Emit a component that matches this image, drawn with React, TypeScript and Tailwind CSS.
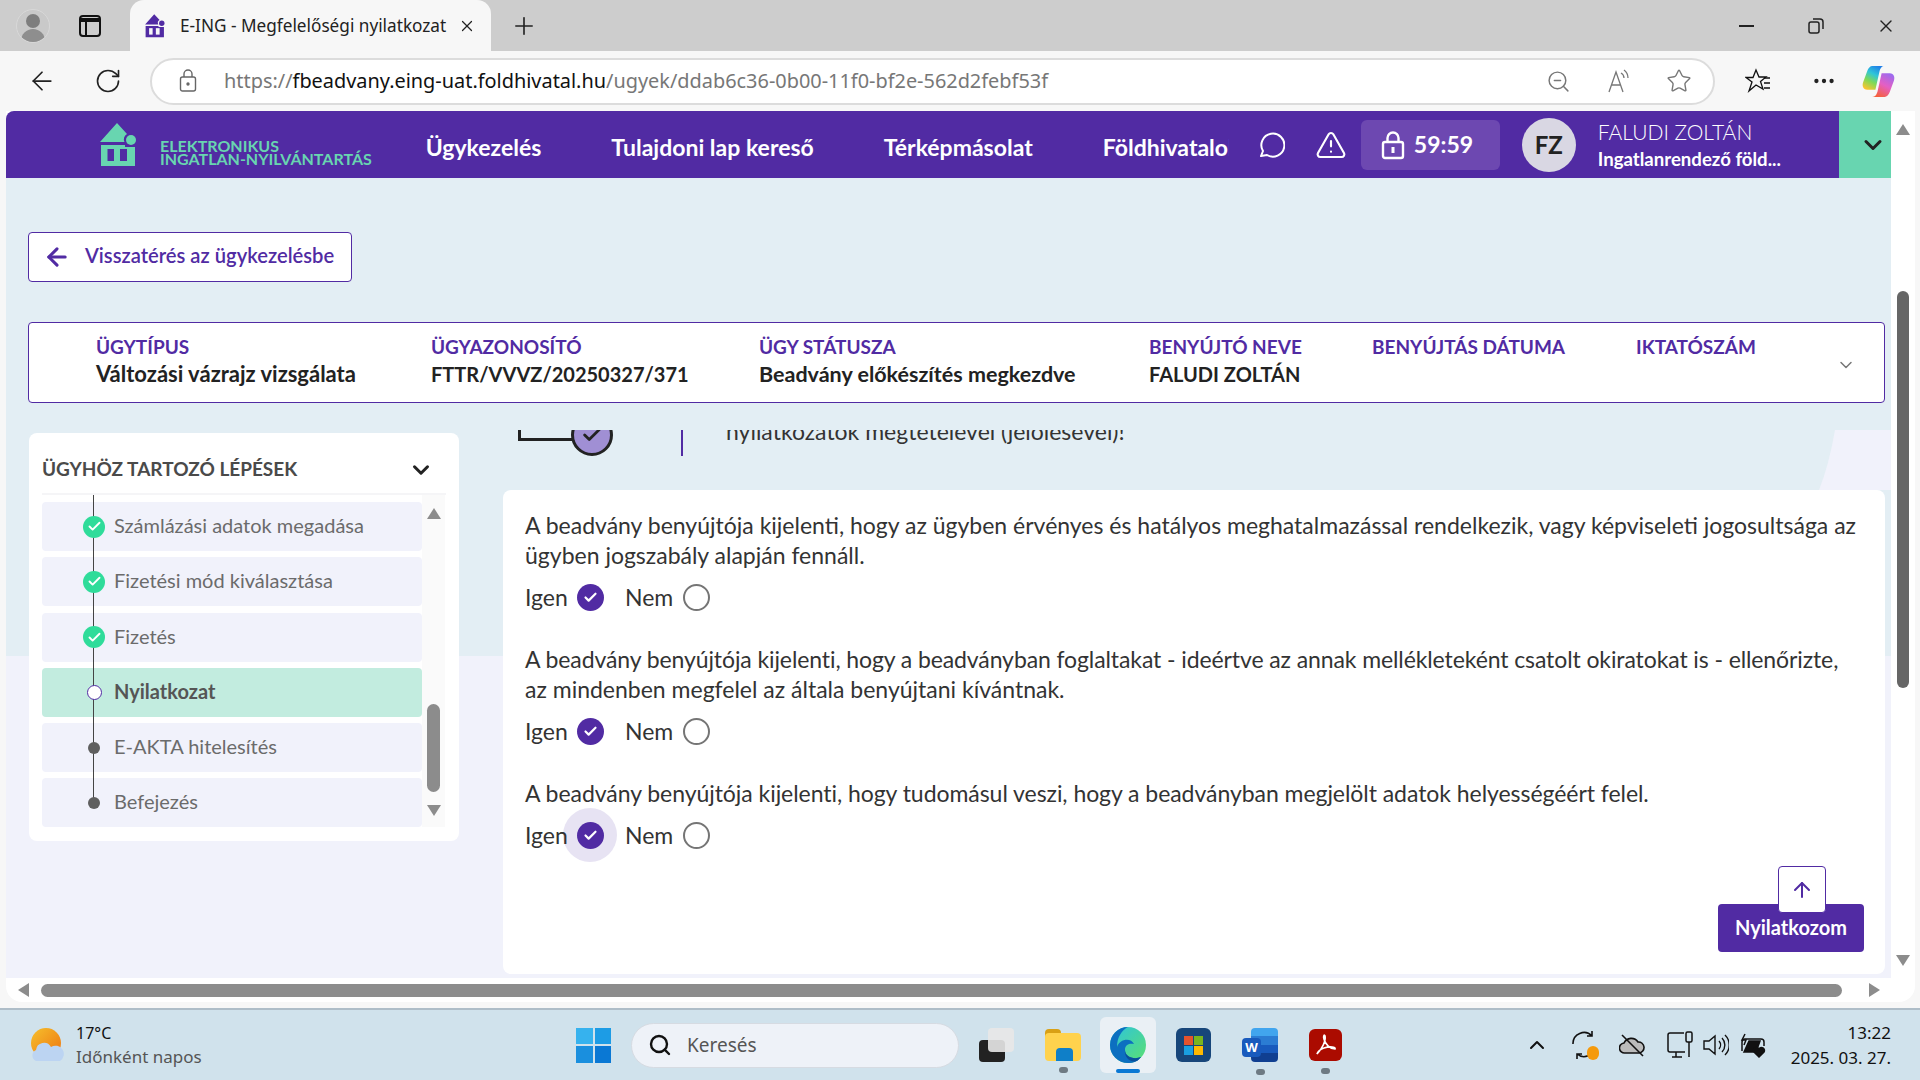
import React from 'react';
import { ArrowLeft, ArrowUp, ChevronDown, ChevronUp, Check, MoreHorizontal, Plus, RotateCw, Search, Star, TriangleAlert, X, ZoomOut } from 'lucide-react';

const PURPLE = '#512ba3';

const steps = [
  { label: 'Számlázási adatok megadása', state: 'done' },
  { label: 'Fizetési mód kiválasztása', state: 'done' },
  { label: 'Fizetés', state: 'done' },
  { label: 'Nyilatkozat', state: 'active' },
  { label: 'E-AKTA hitelesítés', state: 'todo' },
  { label: 'Befejezés', state: 'todo' },
];

const infoColumns = [
  { label: 'ÜGYTÍPUS', value: 'Változási vázrajz vizsgálata', width: 'w-[335px]', size: 'text-[22px]' },
  { label: 'ÜGYAZONOSÍTÓ', value: 'FTTR/VVVZ/20250327/371', width: 'w-[328px]', size: 'text-[20px]' },
  { label: 'ÜGY STÁTUSZA', value: 'Beadvány előkészítés megkezdve', width: 'w-[390px]', size: 'text-[21.5px]' },
  { label: 'BENYÚJTÓ NEVE', value: 'FALUDI ZOLTÁN', width: 'w-[223px]', size: 'text-[20px]' },
  { label: 'BENYÚJTÁS DÁTUMA', value: '', width: 'w-[264px]', size: 'text-[20px]' },
  { label: 'IKTATÓSZÁM', value: '', width: 'w-[200px]', size: 'text-[20px]' },
];

const Logo = ({ color, cut, className }: { color: string; cut: string; className: string }) => (
  <svg viewBox="0 0 39 44" className={className}>
    <path d="M2 19 L19 0 L29 11 A6 6 0 0 0 26.5 19 Z" fill={color} />
    <circle cx="33" cy="17" r="5" fill={color} />
    <path d="M3 22 H27 V24 H37 V43 H3 Z" fill={color} />
    <rect x="9.5" y="26" width="6.5" height="12" fill={cut} />
    <rect x="22" y="26" width="7" height="12" fill={cut} />
  </svg>
);

const Radio = ({ checked, halo }: { checked?: boolean; halo?: boolean }) => (
  <span className={`flex h-[54px] w-[54px] items-center justify-center rounded-full ${halo ? 'bg-[#e7e3f3]' : ''}`}>
    {checked ? (
      <span className="flex h-[27px] w-[27px] items-center justify-center rounded-full bg-[#512ba3]">
        <Check className="h-[15px] w-[15px] text-white" strokeWidth={3.5} />
      </span>
    ) : (
      <span className="h-[27px] w-[27px] rounded-full border-2 border-[#757575] bg-white" />
    )}
  </span>
);

const Question = ({ lines, halo, firstLine }: { lines: string[]; halo?: boolean; firstLine?: string }) => (
  <div>
    {lines.map((line, index) => (
      <p key={line} className={`h-[30px] whitespace-nowrap text-[23px] leading-[30px] text-[#333] ${index === 0 ? firstLine ?? '' : ''}`}>{line}</p>
    ))}
    <div className="flex h-[54px] items-center text-[23px] text-[#333]">
      <span className="relative z-10 w-[38px] whitespace-nowrap">Igen</span>
      <Radio checked halo={halo} />
      <span className="ml-[8px] w-[44px]">Nem</span>
      <Radio />
    </div>
  </div>
);

const TabStrip = () => (
  <div className="flex h-[51px] shrink-0 items-center bg-[#cdcdcd]">
    <div className="ml-[16px] flex h-[34px] w-[34px] flex-col items-center justify-end overflow-hidden rounded-full border border-[#d8d8d8] bg-[#c9c9c9]">
      <span className="h-[14px] w-[14px] rounded-full bg-[#7e7e7e]" />
      <span className="mt-px h-[13px] w-[24px] rounded-t-full bg-[#8e8e8e]" />
    </div>
    <svg viewBox="0 0 22 22" className="ml-[29px] h-[22px] w-[22px]" fill="none" stroke="#111" strokeWidth="2">
      <rect x="1" y="1" width="20" height="20" rx="3" />
      <path d="M1 5 H21" strokeWidth="4" />
      <path d="M7 5 V21" />
    </svg>
    <div className="ml-[29px] flex h-[51px] w-[361px] items-center self-end rounded-t-[14px] bg-[#f7f7f7]">
      <Logo color={PURPLE} cut="#f7f7f7" className="ml-[14px] h-[24px] w-[21px]" />
      <span className="ml-[15px] whitespace-nowrap text-[17.2px] text-[#222] [font-family:'Noto_Sans',sans-serif]">E-ING - Megfelelőségi nyilatkozat</span>
      <X className="ml-auto mr-[15px] h-[18px] w-[18px] text-[#222]" strokeWidth={1.6} />
    </div>
    <Plus className="ml-[19px] h-[28px] w-[28px] text-[#222]" strokeWidth={1.4} />
    <div className="ml-auto flex items-center">
      <span className="h-[2px] w-[15px] bg-[#222]" />
      <svg viewBox="0 0 16 16" className="ml-[54px] h-[16px] w-[16px]" fill="none" stroke="#222" strokeWidth="1.5">
        <rect x="1" y="4" width="10" height="11" rx="2" />
        <path d="M5 1 H12 A3 3 0 0 1 15 4 V11" />
      </svg>
      <X className="ml-[52px] mr-[24px] h-[20px] w-[20px] text-[#222]" strokeWidth={1.6} />
    </div>
  </div>
);

const Toolbar = () => (
  <div className="flex h-[60px] shrink-0 items-center bg-[#f7f7f7]">
    <ArrowLeft className="ml-[27px] h-[30px] w-[30px] text-[#222]" strokeWidth={1.4} />
    <RotateCw className="ml-[37px] h-[28px] w-[28px] text-[#222]" strokeWidth={1.4} />
    <div className="ml-[28px] flex h-[47px] w-[1565px] items-center rounded-full border-2 border-[#dcdcdc] bg-white">
      <svg viewBox="0 0 18 24" className="ml-[27px] h-[24px] w-[18px]" fill="none" stroke="#666" strokeWidth="1.4">
        <rect x="1.5" y="8" width="15" height="14" rx="2" />
        <path d="M5 8 V5 A4 4 0 0 1 13 5 V8" />
        <circle cx="9" cy="15" r="1" fill="#666" />
      </svg>
      <span className="ml-[27px] whitespace-nowrap text-[19.9px] text-[#777] [font-family:'Noto_Sans',sans-serif]">
        https://<span className="text-[#111]">fbeadvany.eing-uat.foldhivatal.hu</span>/ugyek/ddab6c36-0b00-11f0-bf2e-562d2febf53f
      </span>
      <ZoomOut className="ml-auto h-[25px] w-[25px] text-[#777]" strokeWidth={1.4} />
      <svg viewBox="0 0 26 26" className="ml-[36px] h-[26px] w-[26px]" fill="none" stroke="#777" strokeWidth="1.3">
        <path d="M2 24 L9 4 L16 24 M4.5 17 H13.5" />
        <path d="M14 5 A6 6 0 0 1 17 10 M17 2 A10 10 0 0 1 21 10" />
      </svg>
      <Star className="ml-[33px] mr-[21px] h-[26px] w-[26px] text-[#777]" strokeWidth={1.3} />
    </div>
    <svg viewBox="0 0 26 26" className="ml-[30px] h-[26px] w-[26px]" fill="none" stroke="#111" strokeWidth="1.3">
      <path d="M11 2 L14 9 H21 L15.5 13.5 L18 21 L11 17 L4 23 L7 14 L1 9.5 H8 Z" />
      <path d="M19 10 H25 M19 15 H25 M19 20 H25" />
    </svg>
    <MoreHorizontal className="ml-[40px] h-[26px] w-[26px] text-[#222]" strokeWidth={2} />
    <svg viewBox="0 0 32 32" className="ml-[25px] h-[33px] w-[33px]">
      <defs>
        <linearGradient id="cp1" x1="0.7" y1="0" x2="0.2" y2="1">
          <stop offset="0" stopColor="#1f7fe8" />
          <stop offset="0.35" stopColor="#2fc6d8" />
          <stop offset="0.65" stopColor="#7ed957" />
          <stop offset="1" stopColor="#ffc42e" />
        </linearGradient>
        <linearGradient id="cp2" x1="0.8" y1="0" x2="0.3" y2="1">
          <stop offset="0" stopColor="#9a6bf0" />
          <stop offset="0.5" stopColor="#e45fc4" />
          <stop offset="1" stopColor="#f5613c" />
        </linearGradient>
      </defs>
      <path d="M10 1 H22 C19 1 18 3 17 6 L13 24 H5 C1 24 0 20 1 17 L5 6 C6 3 8 1 10 1 Z" fill="url(#cp1)" />
      <path d="M22 31 H10 C13 31 14 29 15 26 L19 8 H27 C31 8 32 12 31 15 L27 26 C26 29 24 31 22 31 Z" fill="url(#cp2)" />
    </svg>
  </div>
);

const AppHeader = () => (
  <div className="flex h-[67px] shrink-0 items-center overflow-hidden rounded-tl-lg bg-[#512ba3]">
    <Logo color="#68d5b0" cut="#512ba3" className="ml-[92px] h-[44px] w-[39px]" />
    <div className="ml-[23px] mt-[15px] text-[16px] font-bold leading-[13px] text-[#68d5b0]">
      <div>ELEKTRONIKUS</div>
      <div className="whitespace-nowrap">INGATLAN-NYILVÁNTARTÁS</div>
    </div>
    <nav className="ml-[54px] mt-[5px] flex w-[803px] gap-[70px] overflow-hidden whitespace-nowrap text-[23px] font-bold text-white">
      <span>Ügykezelés</span>
      <span>Tulajdoni lap kereső</span>
      <span>Térképmásolat</span>
      <span>Földhivatalok</span>
    </nav>
    <svg viewBox="0 0 28 28" className="ml-[28px] h-[28px] w-[28px]" fill="none" stroke="#fff" strokeWidth="2">
      <path d="M4 25 L6 20 A11.5 11.5 0 1 1 10 24 Z" strokeLinejoin="round" />
    </svg>
    <TriangleAlert className="ml-[30px] h-[32px] w-[32px] text-white" strokeWidth={1.6} />
    <div className="ml-[14px] flex h-[50px] w-[139px] items-center rounded-md bg-[#6d48b1]">
      <svg viewBox="0 0 24 30" className="ml-[20px] h-[30px] w-[24px]" fill="none" stroke="#fff" strokeWidth="2.4">
        <rect x="2" y="12" width="20" height="16" rx="2" />
        <path d="M6.5 12 V8 A5.5 5.5 0 0 1 17.5 8 V12" />
        <path d="M12 17 V23" strokeWidth="3" />
      </svg>
      <span className="ml-[9px] text-[23px] font-bold text-white">59:59</span>
    </div>
    <div className="ml-[22px] flex h-[54px] w-[54px] items-center justify-center rounded-full bg-[#d9d7e3] text-[24px] font-bold text-[#222]">FZ</div>
    <div className="ml-[22px] w-[241px] text-white">
      <div className="text-[21px] font-light leading-[28px]">FALUDI ZOLTÁN</div>
      <div className="text-[18.6px] font-bold leading-[26px]">Ingatlanrendező föld...</div>
    </div>
    <div className="flex h-full w-[52px] items-center justify-center bg-[#68d5b0] pl-[16px]">
      <ChevronDown className="h-[28px] w-[28px] text-[#222]" strokeWidth={2.6} />
    </div>
  </div>
);

const Sidebar = () => (
  <div className="ml-px mt-[30px] h-[408px] w-[430px] shrink-0 rounded-lg bg-white">
    <div className="mx-[13px] flex h-[62px] items-center justify-between border-b-2 border-[#f5f5f7] pt-[13px]">
      <span className="whitespace-nowrap text-[19px] font-bold text-[#4a4a4a]">ÜGYHÖZ TARTOZÓ LÉPÉSEK</span>
      <ChevronDown className="mr-[12px] h-[26px] w-[26px] text-[#222]" strokeWidth={2.8} />
    </div>
    <div className="ml-[13px] flex h-[332px]">
      <div className="relative flex w-[380px] flex-col gap-[6.3px] pt-[7px]">
        <span className="absolute left-[51px] top-0 bottom-[27px] z-10 w-px bg-[#444]" />
        {steps.map(step => (
          <div
            key={step.label}
            className={`relative flex h-[49px] shrink-0 items-center gap-[9px] rounded-sm pl-[41px] text-[20px] ${
              step.state === 'active' ? 'bg-[#c2ecdf] font-bold text-[#555]' : 'bg-[#f1f2fb] text-[#6b6b6b]'
            }`}
          >
            <span className="relative z-20 flex h-[22px] w-[22px] items-center justify-center">
              {step.state === 'done' && (
                <span className="flex h-[22px] w-[22px] items-center justify-center rounded-full bg-[#2fdc9a]">
                  <Check className="h-[15px] w-[15px] text-white" strokeWidth={3} />
                </span>
              )}
              {step.state === 'active' && <span className="h-[15px] w-[15px] rounded-full border border-[#512ba3] bg-white" />}
              {step.state === 'todo' && <span className="h-[12px] w-[12px] rounded-full bg-[#5f5f5f]" />}
            </span>
            <span className="whitespace-nowrap pb-[3px]">{step.label}</span>
          </div>
        ))}
      </div>
      <div className="flex w-[23px] flex-col items-center bg-[#fafafa]">
        <span className="mt-[13px] h-0 w-0 border-x-[7px] border-b-[11px] border-x-transparent border-b-[#8c8c8c]" />
        <span className="mt-[185px] h-[88px] w-[13px] rounded-full bg-[#8c8c8c]" />
        <span className="mt-[13px] h-0 w-0 border-x-[7px] border-t-[11px] border-x-transparent border-t-[#8c8c8c]" />
      </div>
    </div>
  </div>
);

const MainColumn = () => (
  <div className="relative ml-[44px] flex w-[1382px] flex-col">
    {/* a lap felső része már kigördült, csak az alja látszik */}
    <svg viewBox="0 0 72 60" className="absolute right-[-6px] top-[27px] h-[60px] w-[72px]">
      <path d="M16 0 H72 V60 H0 Q10 35 16 0 Z" fill="#f1f2fb" />
    </svg>
    <div className="relative mt-[27px] flex h-[60px] shrink-0 overflow-hidden">
      <div className="ml-[15px] h-[11px] w-[56px] border-b-[3px] border-l-[3px] border-[#222]" />
      <div className="relative -mt-[16px] -ml-[3px] flex h-[42px] w-[42px] items-center justify-center rounded-full border-[3px] border-[#222] bg-[#a08fd4]">
        <Check className="h-[22px] w-[22px] text-[#222]" strokeWidth={3} />
      </div>
      <div className="ml-[68px] h-[26px] w-[2px] bg-[#512ba3]" />
      <p className="ml-[43px] -mt-[14px] whitespace-nowrap text-[23px] leading-[30px] text-[#333]">nyilatkozatok megtételével (jelölésével)!</p>
    </div>
    <div className="relative h-[484px] rounded-lg bg-white pl-[22px] pt-[20px]">
      <Question
        lines={[
          'A beadvány benyújtója kijelenti, hogy az ügyben érvényes és hatályos meghatalmazással rendelkezik, vagy képviseleti jogosultsága az',
          'ügyben jogszabály alapján fennáll.',
        ]}
      />
      <div className="mt-[20px]">
        <Question
          firstLine="tracking-[-0.1px]"
          lines={[
            'A beadvány benyújtója kijelenti, hogy a beadványban foglaltakat - ideértve az annak mellékleteként csatolt okiratokat is - ellenőrizte,',
            'az mindenben megfelel az általa benyújtani kívántnak.',
          ]}
        />
      </div>
      <div className="mt-[20px]">
        <Question
          halo
          firstLine="tracking-[-0.05px]"
          lines={['A beadvány benyújtója kijelenti, hogy tudomásul veszi, hogy a beadványban megjelölt adatok helyességéért felel.']}
        />
      </div>
      <button className="absolute bottom-[22px] right-[21px] h-[48px] w-[146px] rounded bg-[#512ba3] pb-[2px] text-[20px] font-bold text-white">Nyilatkozom</button>
      <div className="absolute bottom-[61px] right-[59px] flex h-[47px] w-[48px] items-center justify-center rounded border border-[#512ba3] bg-white">
        <ArrowUp className="h-[24px] w-[24px] text-[#512ba3]" strokeWidth={2} />
      </div>
    </div>
  </div>
);

const PageArea = () => (
  <div className="flex h-[897px] shrink-0 bg-[#f7f7f7] pb-[6px] pl-[6px] pr-[5px]">
    <div className="flex w-full overflow-hidden rounded-b-2xl bg-white">
      <div className="flex w-[1885px] flex-col">
        <AppHeader />
        <div className="h-[800px] shrink-0 bg-[linear-gradient(#e3eef4_478px,#f1f2fb_478px)] pl-[22px] pr-[6px]">
          <button className="mt-[54px] flex h-[50px] w-[324px] items-center rounded border border-[#512ba3] bg-white text-[20.2px] font-semibold text-[#512ba3]">
            <ArrowLeft className="ml-[14px] h-[28px] w-[28px]" strokeWidth={2.6} />
            <span className="ml-[14px] whitespace-nowrap pb-[3px]">Visszatérés az ügykezelésbe</span>
          </button>
          <div className="mt-[40px] flex h-[81px] items-center rounded border-[1.5px] border-[#512ba3] bg-white pl-[67px]">
            {infoColumns.map(col => (
              <div key={col.label} className={`${col.width} shrink-0 whitespace-nowrap pb-[6px]`}>
                <div className="text-[19px] font-bold leading-[28px] text-[#512ba3]">{col.label}</div>
                <div className={`h-[26px] font-bold leading-[26px] text-[#222] ${col.size}`}>{col.value}</div>
              </div>
            ))}
            <ChevronDown className="mt-[5px] h-[20px] w-[20px] text-[#777]" strokeWidth={1.8} />
          </div>
          <div className="flex">
            <Sidebar />
            <MainColumn />
          </div>
        </div>
        {/* vízszintes görgetősáv */}
        <div className="flex h-[24px] shrink-0 items-center">
          <span className="ml-[12px] h-0 w-0 border-y-[7px] border-r-[11px] border-y-transparent border-r-[#8c8c8c]" />
          <span className="ml-[12px] h-[13px] w-[1801px] rounded-full bg-[#8c8c8c]" />
          <span className="ml-[27px] h-0 w-0 border-y-[7px] border-l-[11px] border-y-transparent border-l-[#8c8c8c]" />
        </div>
      </div>
      {/* függőleges görgetősáv */}
      <div className="flex w-[24px] flex-col pl-[5px]">
        <span className="mt-[13px] h-0 w-0 border-x-[7px] border-b-[11px] border-x-transparent border-b-[#8c8c8c]" />
        <span className="ml-px mt-[156px] h-[397px] w-[12px] rounded-full bg-[#666]" />
        <span className="mt-[267px] h-0 w-0 border-x-[7px] border-t-[11px] border-x-transparent border-t-[#8c8c8c]" />
      </div>
    </div>
  </div>
);

const Taskbar = () => (
  <div className="flex h-[72px] shrink-0 items-center border-t-2 border-[#aebdc8] bg-[#d0e2ec] [font-family:'Noto_Sans',sans-serif]">
    <svg viewBox="0 0 34 34" className="ml-[31px] h-[34px] w-[34px]">
      <defs>
        <linearGradient id="sun" x1="0" y1="0" x2="1" y2="1">
          <stop offset="0" stopColor="#f6c02c" />
          <stop offset="1" stopColor="#ee7411" />
        </linearGradient>
      </defs>
      <circle cx="15" cy="15" r="15" fill="url(#sun)" />
      <path d="M5 33 A6 6 0 0 1 5 22 A8 8 0 0 1 20 19 A7 7 0 0 1 29 33 Z" fill="#bcd4f2" />
    </svg>
    <div className="ml-[11px] w-[130px] whitespace-nowrap">
      <div className="text-[16px] leading-[24px] text-[#111]">17°C</div>
      <div className="text-[17px] leading-[24px] text-[#555]">Időnként napos</div>
    </div>
    <div className="ml-[370px] grid h-[35px] w-[35px] grid-cols-2 gap-[2px]">
      <span className="bg-[#36b2ee]" />
      <span className="bg-[#1d9ce5]" />
      <span className="bg-[#1a8fde]" />
      <span className="bg-[#0a78d4]" />
    </div>
    <div className="ml-[20px] flex h-[45px] w-[328px] items-center rounded-full border border-[#d6dbe2] bg-[#eef2f8]">
      <Search className="ml-[16px] h-[24px] w-[24px] text-[#111]" strokeWidth={2.4} />
      <span className="ml-[15px] text-[19px] text-[#555]">Keresés</span>
    </div>
    <div className="relative ml-[20px] h-[34px] w-[35px]">
      <span className="absolute bottom-0 left-0 h-[22px] w-[26px] rounded-sm bg-[#222]" />
      <span className="absolute right-0 top-0 h-[24px] w-[26px] rounded-sm bg-[#e8e8e8] opacity-90" />
    </div>
    <div className="relative ml-[31px] h-[32px] w-[36px]">
      <span className="absolute left-0 top-0 h-[10px] w-[16px] rounded-t-sm bg-[#d9a015]" />
      <span className="absolute bottom-0 left-0 right-0 top-[4px] rounded-sm bg-[#ffd24d]" />
      <span className="absolute bottom-0 left-[11px] h-[13px] w-[17px] rounded-t-sm bg-[#0f7fc8]" />
      <span className="absolute -bottom-[12px] left-[14px] h-[6px] w-[9px] rounded-full bg-[#6e7a83]" />
    </div>
    <div className="relative ml-[19px] flex h-[56px] w-[56px] items-center justify-center rounded-md bg-[#eaf0f5]">
      <svg viewBox="0 0 36 36" className="h-[36px] w-[36px]">
        <defs>
          <linearGradient id="edgeA" x1="0" y1="0" x2="1" y2="1">
            <stop offset="0" stopColor="#2dc3e0" />
            <stop offset="1" stopColor="#5be06f" />
          </linearGradient>
        </defs>
        <circle cx="18" cy="18" r="18" fill="url(#edgeA)" />
        <path d="M18 0 A18 18 0 0 0 18 36 C24 36 28 34 31 30 C24 33 14 30 15 22 C15.5 17 20 16 24 17 C21 10 9 12 7 20 C7 10 12 3 18 0 Z" fill="#0c6fc0" />
        <path d="M15 23 C15 30 24 33 31 30 L27 34 C20 36 14 30 15 23 Z" fill="#0a4f9a" />
      </svg>
      <span className="absolute bottom-0 left-[16px] h-[4px] w-[24px] rounded-full bg-[#0a78d4]" />
    </div>
    <div className="ml-[20px] flex h-[34px] w-[35px] items-center justify-center rounded-md bg-[#17467a]">
      <div className="grid h-[19px] w-[19px] grid-cols-2 gap-px">
        <span className="bg-[#e5532d]" />
        <span className="bg-[#7ab51d]" />
        <span className="bg-[#1a9fe0]" />
        <span className="bg-[#ffb900]" />
      </div>
    </div>
    <div className="relative ml-[31px] h-[34px] w-[36px]">
      <span className="absolute bottom-0 right-0 top-0 w-[27px] rounded-sm bg-[linear-gradient(#41a5ee_25%,#2b7cd3_25%,#2b7cd3_50%,#185abd_50%,#185abd_75%,#103f91_75%)]" />
      <span className="absolute left-0 top-[10px] flex h-[19px] w-[19px] items-center justify-center rounded-sm bg-[#185abd] text-[13px] font-bold text-white">W</span>
      <span className="absolute -bottom-[13px] left-[14px] h-[6px] w-[9px] rounded-full bg-[#6e7a83]" />
    </div>
    <div className="relative ml-[31px] flex h-[32px] w-[33px] items-center justify-center rounded-md bg-[#ab0b00]">
      <svg viewBox="0 0 24 24" className="h-[24px] w-[24px]" fill="none" stroke="#fff" strokeWidth="1.7">
        <path d="M3 21 C8 16 12 8 11 3 C10.5 1 9 3 10 6 C11 11 16 16 21 16 C22 14 16 13 10 15 C7 16 4 18 3 21 Z" />
      </svg>
      <span className="absolute -bottom-[13px] left-[12px] h-[6px] w-[9px] rounded-full bg-[#6e7a83]" />
    </div>
    <ChevronUp className="ml-[183px] h-[24px] w-[24px] text-[#111]" strokeWidth={2} />
    <div className="relative ml-[22px] h-[30px] w-[28px]">
      <svg viewBox="0 0 28 30" className="h-[30px] w-[28px]" fill="none" stroke="#111" strokeWidth="1.6">
        <path d="M2 14 A11 11 0 0 1 21 6 M21 1 V6 H16 M24 17 A11 11 0 0 1 6 24 M6 29 V24 H11" />
      </svg>
      <span className="absolute bottom-0 right-0 h-[14px] w-[12px] rounded-full bg-[#f59a0c]" />
    </div>
    <svg viewBox="0 0 26 24" className="ml-[20px] h-[24px] w-[26px]" fill="none" stroke="#111" strokeWidth="1.6">
      <path d="M6 20 A5 5 0 0 1 5 10 A8 8 0 0 1 19 9 A5.5 5.5 0 0 1 20 20 Z" fill="#bbb" />
      <path d="M3 2 L24 23" />
    </svg>
    <svg viewBox="0 0 26 28" className="ml-[22px] h-[28px] w-[26px]" fill="none" stroke="#111" strokeWidth="1.5">
      <path d="M17 2 H3 A2 2 0 0 0 1 4 V19 A2 2 0 0 0 3 21 H18 M9 21 V26 M5 26 H15" />
      <rect x="19" y="1" width="6" height="10" rx="1.5" />
      <path d="M22 11 V26" />
    </svg>
    <svg viewBox="0 0 26 24" className="ml-[10px] h-[24px] w-[26px]" fill="none" stroke="#111" strokeWidth="1.4">
      <path d="M1 8 H6 L12 3 V21 L6 16 H1 Z M16 8 A6 6 0 0 1 16 16 M19 5 A10 10 0 0 1 19 19 M22 2 A14 14 0 0 1 22 22" />
    </svg>
    <svg viewBox="0 0 26 26" className="ml-[11px] h-[26px] w-[26px]" fill="none" stroke="#111" strokeWidth="1.5">
      <path d="M5 7 H21 A3 3 0 0 1 24 10 V14 M2 19 V10 A3 3 0 0 1 5 7" />
      <path d="M4 20 L9 9 H20 L16 20 Z" fill="#111" />
      <path d="M5 2 L2 8 H6 L4 13" />
      <path d="M19 25 L14 20 A2.5 2.5 0 0 1 19 17 A2.5 2.5 0 0 1 24 20 Z" fill="#111" />
    </svg>
    <div className="ml-auto pr-[29px] text-right text-[17px] leading-[25px] text-[#111]">
      <div>13:22</div>
      <div>2025. 03. 27.</div>
    </div>
  </div>
);

const App: React.FC = () => (
  <div className="flex h-[1080px] w-[1920px] flex-col overflow-hidden [font-family:Lato,sans-serif]">
    <TabStrip />
    <Toolbar />
    <PageArea />
    <Taskbar />
  </div>
);

export default App;
